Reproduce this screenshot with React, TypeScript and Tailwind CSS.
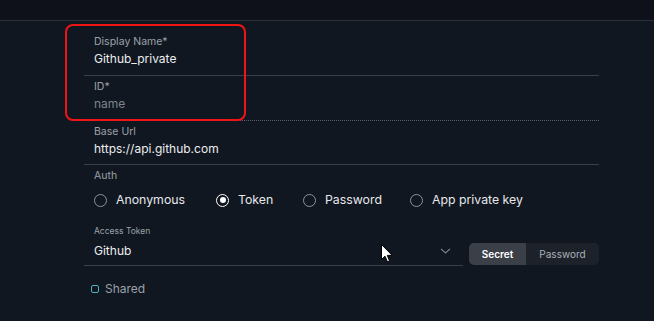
const RADIOS: { label: string; width: string; checked?: boolean }[] = [
  { label: 'Anonymous', width: 'w-[122px]' },
  { label: 'Token', width: 'w-[87px]', checked: true },
  { label: 'Password', width: 'w-[107px]' },
  { label: 'App private key', width: '' },
]

function Radio({ label, checked }: { label: string; checked?: boolean }) {
  return (
    <label className="flex items-center gap-[9px] text-[12.3px] text-[#e6e8eb]">
      <span
        className={`flex h-[13px] w-[13px] items-center justify-center rounded-full border-[1.5px] ${
          checked ? 'border-white' : 'border-[#8d939b]'
        }`}
      >
        {checked && <span className="h-[6px] w-[6px] rounded-full bg-white" />}
      </span>
      {label}
    </label>
  )
}

function Field({
  label,
  value,
  placeholder,
  dotted,
  first,
  last,
}: {
  label: string
  value?: string
  placeholder?: string
  dotted?: boolean
  first?: boolean
  last?: boolean
}) {
  return (
    <div
      className={`${first ? 'pt-[14px]' : 'pt-[4px]'} ${last ? 'pb-[5px]' : 'pb-[6px]'} pl-[10px] border-b ${
        dotted ? 'border-dotted border-[#5a5f68]' : 'border-[#3a3f47]'
      }`}
    >
      <div className="text-[10.5px] leading-[14px] text-[#9ba1aa]">{label}</div>
      <div className={`text-[12px] leading-[20px] ${value ? 'text-[#eceef0]' : 'text-[#7d838c]'}`}>
        {value ?? placeholder}
      </div>
    </div>
  )
}

export default function App() {
  return (
    <div
      className="relative h-[321px] w-[654px] overflow-hidden bg-[#111720]"
      style={{ fontFamily: 'Inter, "Noto Sans", sans-serif' }}
    >
      {/* top bar */}
      <div className="h-[21px] border-b border-[#2c3038] bg-[#0e111a]" />

      <div className="ml-[84px] w-[515px]">
        <Field first label="Display Name*" value="Github_private" />
        <Field dotted label="ID*" placeholder="name" />
        <Field last label="Base Url" value="https://api.github.com" />

        {/* auth */}
        <div className="pl-[10px] pt-[4px]">
          <div className="text-[10.5px] leading-[14px] text-[#9ba1aa]">Auth</div>
          <div className="mt-[7px] flex h-[20px] items-center">
            {RADIOS.map((r) => (
              <div key={r.label} className={r.width}>
                <Radio label={r.label} checked={r.checked} />
              </div>
            ))}
          </div>
        </div>

        {/* access token */}
        <div className="mt-[15px] pl-[10px] text-[8.5px] leading-[12px] text-[#9ba1aa]">Access Token</div>
        <div className="flex items-end gap-[6px]">
          <div className="flex h-[29px] w-[379px] items-center justify-between border-b border-[#3a3f47] pl-[10px] pr-[12px]">
            <span className="text-[12px] text-[#eceef0]">Github</span>
            <svg width="11" height="6" viewBox="0 0 11 6" fill="none">
              <path d="M1 0.8L5.5 5L10 0.8" stroke="#7d838c" strokeWidth="1.1" />
            </svg>
          </div>
          <div className="mb-[1px] flex h-[22px] w-[130px] overflow-hidden rounded-[5px] text-[10px]">
            <span className="flex w-[57px] items-center justify-center bg-[#3b4048] font-semibold text-white">
              Secret
            </span>
            <span className="flex flex-1 items-center justify-center bg-[#1d222a] text-[#aab0b8]">
              Password
            </span>
          </div>
        </div>

        {/* shared */}
        <div className="mt-[16px] flex items-center gap-[6px] pl-[7px]">
          <span className="h-[8px] w-[8px] rounded-[2px] border-[1.5px] border-[#4fb0bd]" />
          <span className="text-[12px] leading-[14px] text-[#9ba1aa]">Shared</span>
        </div>
      </div>

      {/* annotation highlight */}
      <div className="pointer-events-none absolute left-[65px] top-[24px] h-[97px] w-[181px] rounded-[8px] border-2 border-[#f01414]" />

      {/* mouse cursor */}
      <svg className="absolute left-[381px] top-[244px]" width="12" height="19" viewBox="0 0 12 19">
        <path
          d="M0.5 0.5V15.5L4 12.2L6.4 17.8L8.6 16.9L6.3 11.4H11.2Z"
          fill="white"
          stroke="black"
          strokeWidth="1"
          strokeLinejoin="round"
        />
      </svg>
    </div>
  )
}
